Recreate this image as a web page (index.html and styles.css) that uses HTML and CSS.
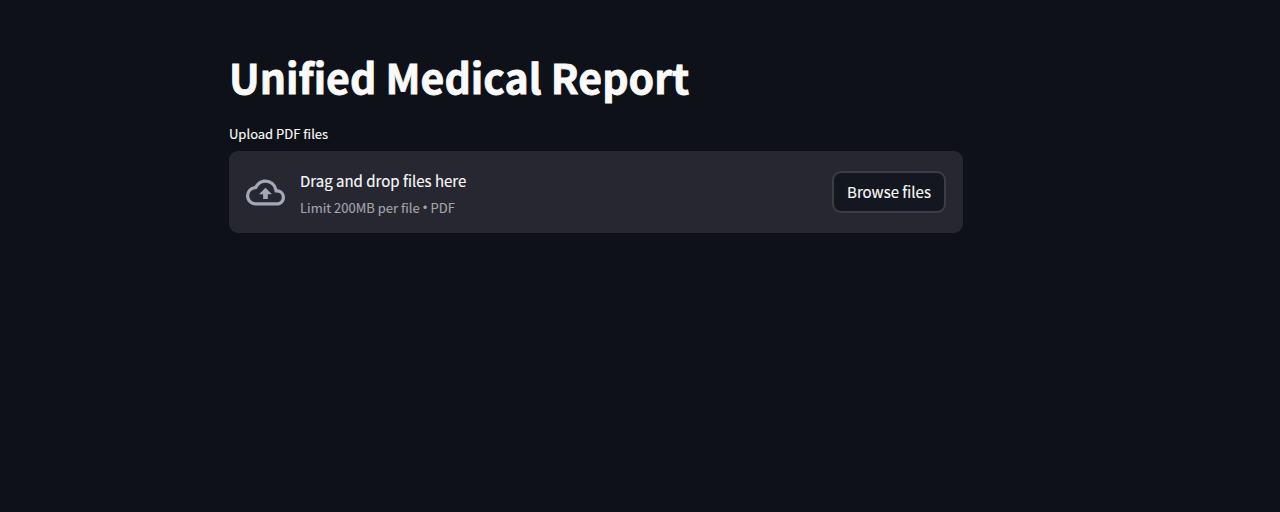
FILE: index.html
```html
<!DOCTYPE html>
<html lang="en">
<head>
<meta charset="utf-8">
<title>Unified Medical Report</title>
<link rel="stylesheet" href="styles.css">
</head>
<body>
<main class="page">
  <h1 class="title">Unified Medical Report</h1>
  <div class="label">Upload PDF files</div>
  <section class="dropzone">
    <svg class="cloud" viewBox="0 0 24 24" fill="currentColor"><path d="M19.35 10.04A7.49 7.49 0 0 0 12 4C9.11 4 6.6 5.64 5.35 8.04A5.994 5.994 0 0 0 0 14c0 3.31 2.69 6 6 6h13c2.76 0 5-2.24 5-5 0-2.64-2.05-4.78-4.65-4.96zM19 18H6c-2.21 0-4-1.79-4-4 0-2.05 1.53-3.76 3.56-3.97l1.07-.11.5-.95A5.469 5.469 0 0 1 12 6c2.62 0 4.88 1.86 5.39 4.43l.3 1.5 1.53.11A2.98 2.98 0 0 1 22 15c0 1.65-1.35 3-3 3zM8 13h2.55v3h2.9v-3H16l-4-4z"/></svg>
    <div class="copy">
      <span class="main">Drag and drop files here</span>
      <small class="hint">Limit 200MB per file <span class="bullet">•</span> PDF</small>
    </div>
    <button class="browse">Browse files</button>
  </section>
</main>
</body>
</html>
```
FILE: styles.css
```css
* { box-sizing: border-box; }
body {
  margin: 0;
  height: 512px;
  overflow: hidden;
  background: #0e1117;
  color: #fafafa;
  font-family: "Noto Sans CJK SC", "Noto Sans", sans-serif;
  -webkit-text-stroke: 0.15px currentColor;
}
.page { width: 734px; margin-left: 229px; padding-top: 46px; }
.title {
  margin: 0;
  height: 60px;
  line-height: 60px;
  font-size: 41px;
  font-weight: 700;
  white-space: nowrap;
  -webkit-text-stroke: 0.8px #fafafa;
}
.label { height: 24px; margin-top: 16px; line-height: 24px; font-size: 13px; }
.dropzone {
  display: flex;
  align-items: center;
  height: 82px;
  margin-top: 5px;
  padding: 0 17px;
  border-radius: 9px;
  background: #262730;
}
.cloud { width: 39px; height: 39px; margin-right: 15px; color: #a3a8b8; }
.copy { display: flex; flex-direction: column; flex: 1; padding-top: 4px; }
.main { height: 27px; line-height: 27px; font-size: 15px; }
.hint { height: 27px; line-height: 27px; font-size: 13px; color: #a3a4a9; }
.bullet { font-family: "Open Sans", sans-serif; font-size: 15px; line-height: 1; margin: 0 -0.3px; }
.browse {
  width: 114px;
  height: 42px;
  padding: 0 0 2px;
  border: 2px solid #3c3d45;
  border-radius: 9px;
  background: #131720;
  color: #fafafa;
  font: inherit;
  font-size: 15px;
}
```
